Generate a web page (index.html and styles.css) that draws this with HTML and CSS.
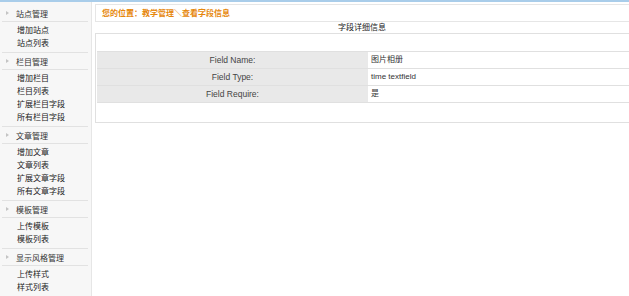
FILE: index.html
```html
<!DOCTYPE html>
<html lang="zh-CN">
<head>
  <meta charset="UTF-8">
  <title>查看字段信息</title>
  <link rel="stylesheet" href="styles.css">
</head>
<body>

<div class="page">
  <aside class="sidebar">
    <div class="group">
      <div class="group-title"><span class="arrow"></span>站点管理</div>
      <ul class="links">
        <li>增加站点</li>
        <li>站点列表</li>
      </ul>
    </div>
    <div class="group">
      <div class="group-title"><span class="arrow"></span>栏目管理</div>
      <ul class="links">
        <li>增加栏目</li>
        <li>栏目列表</li>
        <li>扩展栏目字段</li>
        <li>所有栏目字段</li>
      </ul>
    </div>
    <div class="group">
      <div class="group-title"><span class="arrow"></span>文章管理</div>
      <ul class="links">
        <li>增加文章</li>
        <li>文章列表</li>
        <li>扩展文章字段</li>
        <li>所有文章字段</li>
      </ul>
    </div>
    <div class="group">
      <div class="group-title"><span class="arrow"></span>模板管理</div>
      <ul class="links">
        <li>上传模板</li>
        <li>模板列表</li>
      </ul>
    </div>
    <div class="group">
      <div class="group-title"><span class="arrow"></span>显示风格管理</div>
      <ul class="links">
        <li>上传样式</li>
        <li>样式列表</li>
      </ul>
    </div>
  </aside>

  <main class="content">
    <div class="crumb">您的位置：教学管理＼查看字段信息</div>
    <div class="caption">字段详细信息</div>
    <div class="detail">
      <div class="blank"></div>
      <div class="row">
        <div class="label">Field Name:</div>
        <div class="value">图片相册</div>
      </div>
      <div class="row">
        <div class="label">Field Type:</div>
        <div class="value">time textfield</div>
      </div>
      <div class="row">
        <div class="label">Field Require:</div>
        <div class="value">是</div>
      </div>
      <div class="blank last"></div>
    </div>
  </main>
</div>

</body>
</html>
```

FILE: styles.css
```css
* {
  box-sizing: border-box;
  margin: 0;
  padding: 0;
}

html, body {
  height: 100%;
  overflow: hidden;
}

body {
  font-family: "Liberation Sans", "Noto Sans CJK SC", sans-serif;
  font-size: 8px;
  color: #333;
  background: #fff;
  border-top: 2px solid #a9cdea;
}

.page {
  display: flex;
  height: 100%;
}

/* left menu */
.sidebar {
  width: 92px;
  flex-shrink: 0;
  background: #f7f7f7;
  border-right: 1px solid #e6e6e6;
  padding: 3px 3px 0 2px;
}

.group-title {
  display: flex;
  align-items: center;
  height: 17px;
  padding-left: 4px;
  border-bottom: 1px solid #e2e2e2;
  color: #333;
}

.arrow {
  width: 0;
  height: 0;
  border-top: 2.5px solid transparent;
  border-bottom: 2.5px solid transparent;
  border-left: 3.5px solid #c4c4c4;
  margin-right: 7px;
}

.links {
  list-style: none;
  padding: 2px 0 2px 15px;
  border-bottom: 1px solid #e2e2e2;
}

.links li {
  line-height: 13px;
  color: #222;
}

/* main area */
.content {
  flex: 1;
  padding: 2px 0 0 3px;
}

.crumb {
  height: 18px;
  line-height: 16px;
  padding-left: 6px;
  border: 1px solid #e6e6e6;
  border-right: none;
  color: #e6870b;
  font-weight: bold;
  font-family: "Noto Sans CJK SC", serif;
}

.caption {
  height: 11px;
  line-height: 11px;
  text-align: center;
  width: 534px;
  color: #222;
}

.detail {
  border: 1px solid #e0e0e0;
  border-right: none;
  padding-left: 1px;
}

.blank {
  height: 18px;
  border-bottom: 1px solid #e0e0e0;
}

.blank.last {
  height: 19px;
  border-bottom: none;
}

.row {
  display: grid;
  grid-template-columns: 271px 1fr;
  height: 17px;
  border-bottom: 1px solid #e0e0e0;
}

.label {
  background: #e9e9e9;
  text-align: center;
  line-height: 16px;
  font-size: 8.5px;
  color: #444;
}

.value {
  padding-left: 3px;
  line-height: 16px;
  color: #333;
}
```
